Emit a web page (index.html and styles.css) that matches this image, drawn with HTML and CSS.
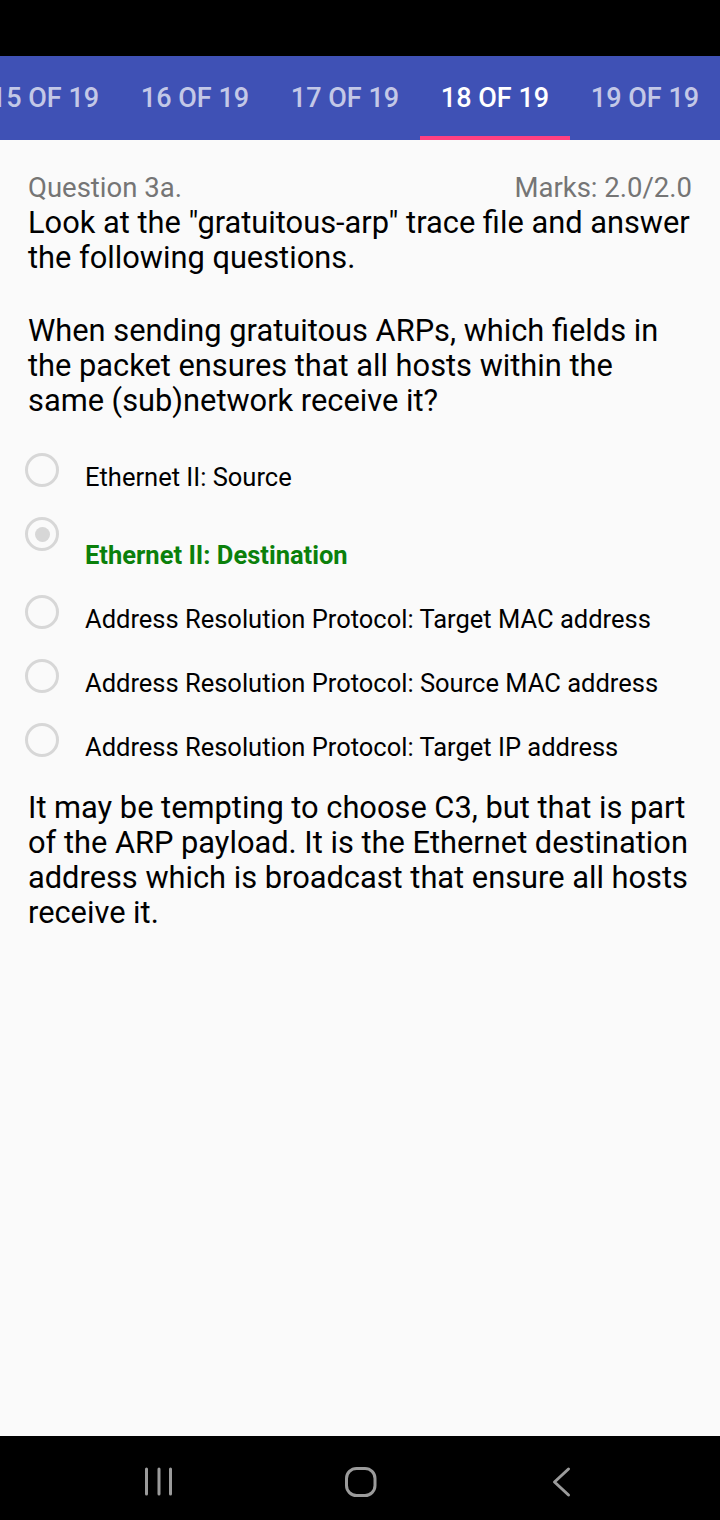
FILE: index.html
```html
<!DOCTYPE html>
<html>
<head>
<meta charset="utf-8">
<link rel="stylesheet" href="styles.css">
</head>
<body>
<div class="screen">
  <div class="status-bar"></div>
  <div class="tab-bar">
    <div class="tabs">
      <div class="tab">15 OF 19</div>
      <div class="tab">16 OF 19</div>
      <div class="tab">17 OF 19</div>
      <div class="tab active">18 OF 19</div>
      <div class="tab">19 OF 19</div>
    </div>
  </div>
  <main class="content">
    <div class="q-header">
      <span class="q-title">Question 3a.</span>
      <span class="q-marks">Marks: 2.0/2.0</span>
    </div>
    <p class="q-text">Look at the "gratuitous-arp" trace file and answer the following questions.</p>
    <p class="q-text q-ask">When sending gratuitous ARPs, which fields in the packet ensures that all hosts within the same (sub)network receive it?</p>
    <ul class="options">
      <li class="option"><span class="radio"></span><span class="opt-label">Ethernet II: Source</span></li>
      <li class="option correct"><span class="radio checked"></span><span class="opt-label">Ethernet II: Destination</span></li>
      <li class="option"><span class="radio"></span><span class="opt-label">Address Resolution Protocol: Target MAC address</span></li>
      <li class="option"><span class="radio"></span><span class="opt-label">Address Resolution Protocol: Source MAC address</span></li>
      <li class="option"><span class="radio"></span><span class="opt-label">Address Resolution Protocol: Target IP address</span></li>
    </ul>
    <p class="explanation">It may be tempting to choose C3, but that is part of the ARP payload. It is the Ethernet destination address which is broadcast that ensure all hosts receive it.</p>
  </main>
  <nav class="nav-bar">
    <div class="nav-cell">
      <svg width="40" height="40" viewBox="0 0 40 40"><g stroke="#9b9b9b" stroke-width="3" stroke-linecap="round"><line x1="7.5" y1="10" x2="7.5" y2="35"/><line x1="20" y1="10" x2="20" y2="35"/><line x1="31.5" y1="10" x2="31.5" y2="35"/></g></svg>
    </div>
    <div class="nav-cell">
      <svg width="40" height="40" viewBox="0 0 40 40"><rect x="6.5" y="9.5" width="28.5" height="27" rx="10" fill="none" stroke="#9b9b9b" stroke-width="3"/></svg>
    </div>
    <div class="nav-cell">
      <svg width="40" height="40" viewBox="0 0 40 40"><polyline points="27.5,10 13.5,23 27.5,36" fill="none" stroke="#9b9b9b" stroke-width="3" stroke-linecap="round" stroke-linejoin="round"/></svg>
    </div>
  </nav>
</div>
</body>
</html>
```

FILE: styles.css
```css
* { box-sizing: border-box; }
html, body { margin: 0; padding: 0; }
body {
  width: 720px;
  height: 1520px;
  font-family: Roboto, "Liberation Sans", sans-serif;
  background: #fafafa;
  overflow: hidden;
}
.screen {
  display: flex;
  flex-direction: column;
  height: 1520px;
}
.status-bar {
  height: 56px;
  background: #000;
  flex: none;
}
.tab-bar {
  height: 84px;
  background: #3f51b5;
  flex: none;
  overflow: hidden;
}
.tabs {
  display: flex;
  margin-left: -30px;
  height: 100%;
}
.tab {
  flex: none;
  width: 150px;
  height: 100%;
  display: flex;
  align-items: center;
  justify-content: center;
  color: rgba(255, 255, 255, 0.7);
  font-weight: 500;
  font-size: 27px;
  white-space: nowrap;
  border-bottom: 4px solid transparent;
  padding-top: 4px;
}
.tab.active {
  color: #fff;
  border-bottom-color: #ff4081;
}
.content {
  flex: 1;
  padding: 32px 24px 0 28px;
}
.q-header {
  display: flex;
  justify-content: space-between;
  font-size: 27.5px;
  line-height: 32px;
  color: #757575;
  margin-right: 4px;
}
.q-text {
  margin: 1px 0 0;
  font-size: 30.8px;
  line-height: 35px;
  color: #000;
}
.q-text.q-ask {
  margin-top: 38px;
}
.options {
  list-style: none;
  margin: 35px 0 0;
  padding: 0;
}
.option {
  display: flex;
  align-items: flex-start;
  gap: 26px;
  margin-left: -3px;
}
.radio {
  flex: none;
  width: 34px;
  height: 34px;
  border-radius: 50%;
  border: 3px solid #d7d7d7;
  display: flex;
  align-items: center;
  justify-content: center;
}
.radio.checked::before {
  content: "";
  width: 15px;
  height: 15px;
  border-radius: 50%;
  background: #d7d7d7;
}
.opt-label {
  font-size: 25.5px;
  line-height: 28px;
  color: #000;
  margin-top: 10px;
  padding-bottom: 26px;
}
.option.correct .opt-label {
  margin-top: 24px;
  font-weight: 700;
  color: #0b800b;
}
.explanation {
  margin: 3px 0 0;
  font-size: 30.8px;
  line-height: 35px;
  color: #000;
}
.nav-bar {
  height: 84px;
  background: #000;
  flex: none;
  display: flex;
  justify-content: center;
  align-items: center;
}
.nav-cell {
  width: 201px;
  display: flex;
  justify-content: center;
}
.nav-cell svg { display: block; margin-top: 2px; }
```
